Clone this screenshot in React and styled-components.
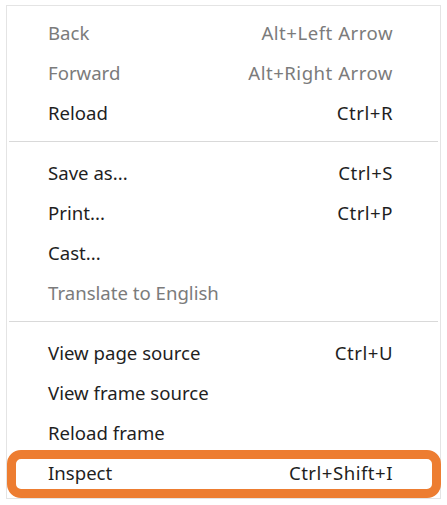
import React from "react";
import styled, { createGlobalStyle } from "styled-components";

const GlobalStyle = createGlobalStyle`
  body {
    margin: 0;
    background: #ffffff;
    font-family: "Noto Sans", "Open Sans", sans-serif;
  }
`;

const Menu = styled.div`
  margin: 5px 0 0 6px;
  width: 433px;
  padding: 7px 0 5px;
  background: #ffffff;
  border: 1px solid #e4e4e4;
`;

const Item = styled.div`
  position: relative;
  display: flex;
  align-items: center;
  justify-content: space-between;
  box-sizing: border-box;
  height: 40px;
  padding: 0 47px 2px 41px;
  font-size: 18.6px;
  color: ${(p) => (p.$disabled ? "#7b7b7b" : "#1f1f1f")};

  ${(p) =>
    p.$highlight &&
    `
    &::after {
      content: "";
      position: absolute;
      top: -3px;
      bottom: -5px;
      left: 0;
      right: -1px;
      border: 9px solid #ed7d31;
      border-radius: 14px;
    }
  `}
`;

const Shortcut = styled.span`
  color: inherit;
  letter-spacing: 0.5px;
`;

const Separator = styled.div`
  height: 1px;
  margin: 8px 2px 11px 2px;
  background: #d9d9d9;
`;

const groups = [
  [
    { label: "Back", keys: "Alt+Left Arrow", disabled: true },
    { label: "Forward", keys: "Alt+Right Arrow", disabled: true },
    { label: "Reload", keys: "Ctrl+R" },
  ],
  [
    { label: "Save as...", keys: "Ctrl+S" },
    { label: "Print...", keys: "Ctrl+P" },
    { label: "Cast..." },
    { label: "Translate to English", disabled: true },
  ],
  [
    { label: "View page source", keys: "Ctrl+U" },
    { label: "View frame source" },
    { label: "Reload frame" },
    { label: "Inspect", keys: "Ctrl+Shift+I", highlight: true },
  ],
];

export default function App() {
  return (
    <>
      <GlobalStyle />
      <Menu>
        {groups.map((items, gi) => (
          <React.Fragment key={gi}>
            {gi > 0 && <Separator />}
            {items.map((item) => (
              <Item
                key={item.label}
                $disabled={item.disabled}
                $highlight={item.highlight}
              >
                <span>{item.label}</span>
                {item.keys && <Shortcut>{item.keys}</Shortcut>}
              </Item>
            ))}
          </React.Fragment>
        ))}
      </Menu>
    </>
  );
}
